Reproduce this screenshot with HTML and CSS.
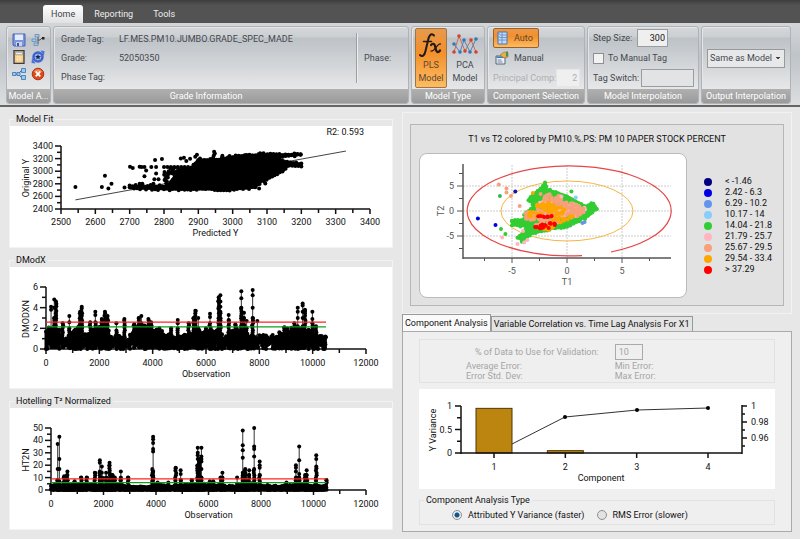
FILE: index.html
```html
<!DOCTYPE html>
<html lang="en">
<head>
    <meta charset="UTF-8">
    <meta name="viewport" content="width=device-width, initial-scale=1.0">
    <title>Model Analysis</title>
    <link rel="stylesheet" href="styles.css">
</head>
<body>
    <nav class="tabs">
        <button class="tab active">Home</button>
        <button class="tab">Reporting</button>
        <button class="tab">Tools</button>
    </nav>
    <header class="ribbon">
        <section class="group actions">
            <div class="group-body icon-grid">
                <button class="icon-btn" aria-label="Save">
                    <svg viewBox="0 0 14 14"><path d="M1 1h12v12H2l-1-1z" fill="#7d95dd" stroke="#4a62b5"/><path d="M3 1.500h8V7H3z" fill="#e4ecfb"/><path d="M4 9h6v4H4z" fill="#c9d3ea"/><path d="M5 10h2v3H5z" fill="#3b55a8"/></svg>
                </button>
                <button class="icon-btn" aria-label="Add node">
                    <svg viewBox="0 0 14 14"><path d="M5 3h2v8H4M7 7h2l2-2h1" fill="none" stroke="#555"/><path d="M1 6h4v2.500H1zM3 10h4v2.500H3zM4 1.500h4V4H4z" fill="#a9cbed" stroke="#5583b3" stroke-width=".7"/><path d="M11 4h2.500v2.500H11z" fill="#222"/></svg>
                </button>
                <button class="icon-btn" aria-label="Calculator">
                    <svg viewBox="0 0 14 14"><path d="M2 .7h10v12.600H2z" fill="#f8c778" stroke="#343c50" stroke-width="1.300"/><path d="M3.500 2.300h7v2.400h-7z" fill="#e8edf5" stroke="#777" stroke-width=".5"/><path d="M3.500 7h7M3.500 9.300h7M5.800 5.500V12M8.200 5.500V12" stroke="#fff1cf" stroke-width=".7"/></svg>
                </button>
                <button class="icon-btn" aria-label="Refresh">
                    <svg viewBox="0 0 14 14"><circle cx="7" cy="7" r="4.500" fill="#9fb6ea" stroke="#3e63cf" stroke-width="2.500"/><path d="M9.500 .5l4 .5-.5 5zM4.500 13.500L.5 13l.5-5z" fill="#4a72dc"/><path d="M7 4l.8 2 2.200.3-1.700 1.200.5 2L7 8.300 5.200 9.500l.5-2L4 6.300 6.200 6z" fill="#18274f"/></svg>
                </button>
                <button class="icon-btn" aria-label="Flow">
                    <svg viewBox="0 0 14 14"><path d="M3 7h3l4-4M6 7l4 4" fill="none" stroke="#3468a6"/><path d="M.5 5.500h3.500v3H.5zM5 5.500h3v3H5zM9.500 1.500h4v4h-4zM9.500 8.500h4v4h-4z" fill="#9bc9f0" stroke="#3871b3" stroke-width=".8"/></svg>
                </button>
                <button class="icon-btn" aria-label="Close">
                    <svg viewBox="0 0 14 14"><circle cx="7" cy="7" r="5.800" fill="#dd4a1c" stroke="#ad3614"/><path d="M2.500 5a5 5 0 0 1 9 0z" fill="#f08e60"/><path d="M4.700 4.700l4.600 4.600M9.300 4.700L4.700 9.300" stroke="#fff" stroke-width="1.800"/></svg>
                </button>
            </div>
            <h2 class="caption">Model A...</h2>
        </section>
        <section class="group grade">
            <div class="group-body grade-body">
                <dl class="fields">
                    <dt>Grade Tag:</dt><dd>LF.MES.PM10.JUMBO.GRADE_SPEC_MADE</dd>
                    <dt>Grade:</dt><dd>52050350</dd>
                    <dt>Phase Tag:</dt><dd></dd>
                </dl>
                <div class="phase">Phase:</div>
            </div>
            <h2 class="caption caption-wide">Grade Information</h2>
        </section>
        <section class="group model-type">
            <div class="group-body models">
                <button class="big-btn pressed">
                    <svg viewBox="0 0 28 28"><g fill="none" stroke="#211b16" stroke-linecap="round"><path d="M17 4.500c-3-3-5 0-6 5L8.500 20c-1 5-3.500 6-5.500 4" stroke-width="2"/><path d="M6.500 10.500h8" stroke-width="1.500"/><path d="M14 14c3-3 4 0 4.500 3s2 6 4.500 2.500" stroke-width="2.200"/><path d="M23.500 13c-3-1-6 8-9.500 7" stroke-width="1.300"/></g></svg>
                    PLS<br>Model
                </button>
                <button class="big-btn">
                    <svg viewBox="0 0 28 28"><path d="M3 21L8 5l6 15 6-11 5 12" fill="none" stroke="#d2694f"/><path d="M3 13l6 8 4-12 6 12 6-13" fill="none" stroke="#4d86bc"/><g fill="#d0432c"><circle cx="8" cy="5" r="1.800"/><circle cx="3" cy="21" r="1.800"/><circle cx="14" cy="20" r="1.800"/><circle cx="20" cy="9" r="1.800"/><circle cx="25" cy="21" r="1.800"/></g><g fill="#3477b7"><circle cx="3" cy="13" r="1.800"/><circle cx="13" cy="9" r="1.800"/><circle cx="9" cy="21" r="1.800"/><circle cx="19" cy="21" r="1.800"/><circle cx="25" cy="8" r="1.800"/></g></svg>
                    PCA<br>Model
                </button>
            </div>
            <h2 class="caption">Model Type</h2>
        </section>
        <section class="group selection">
            <div class="group-body rows">
                <button class="row-btn pressed">
                    <svg viewBox="0 0 14 14"><path d="M3 1h9v12H3z" fill="#c3dbf7" stroke="#4a76b3"/><path d="M2 3h3M2 6h3M2 9h3M5 4h7M5 6.500h7M5 9h7M7 1v12" stroke="#5b87c2" stroke-width=".8"/></svg>
                    Auto
                </button>
                <button class="row-btn">
                    <svg viewBox="0 0 14 14"><path d="M1 5h9v8H1z" fill="#eef3fa" stroke="#53657f"/><path d="M1.500 5.500h8v1.500h-8z" fill="#4279b8"/><path d="M2.500 9h4M2.500 11h5" stroke="#6c84a3"/><path d="M5 4l4-3 4 1v4L9 7z" fill="#e6b047" stroke="#9e6d23" stroke-width=".6"/><path d="M11 .5h2v5h-2z" fill="#4d8c57"/></svg>
                    Manual
                </button>
                <div class="field disabled">
                    <label for="comp">Principal Comp:</label>
                    <input id="comp" class="num" type="text" value="2" disabled>
                </div>
            </div>
            <h2 class="caption">Component Selection</h2>
        </section>
        <section class="group interpolation">
            <div class="group-body rows">
                <div class="field">
                    <label for="step">Step Size:</label>
                    <input id="step" class="num step" type="text" value="300">
                </div>
                <label class="check"><input type="checkbox"> To Manual Tag</label>
                <div class="field">
                    <label for="switch">Tag Switch:</label>
                    <input id="switch" class="switch" type="text">
                </div>
            </div>
            <h2 class="caption">Model Interpolation</h2>
        </section>
        <section class="group output">
            <div class="group-body output-body">
                <select aria-label="Output interpolation">
                    <option>Same as Model</option>
                </select>
            </div>
            <h2 class="caption">Output Interpolation</h2>
        </section>
    </header>
    <main class="content">
        <div class="left">
            <fieldset class="chart-box">
                <legend>Model Fit</legend>
                <svg id="fitChart" class="chart" viewBox="0 0 382 121"></svg>
            </fieldset>
            <fieldset class="chart-box">
                <legend>DModX</legend>
                <svg id="dmodChart" class="chart" viewBox="0 0 382 121"></svg>
            </fieldset>
            <fieldset class="chart-box">
                <legend>Hotelling T² Normalized</legend>
                <svg id="hotelChart" class="chart" viewBox="0 0 382 121"></svg>
            </fieldset>
        </div>
        <div class="right">
            <section class="score-wrap">
                <div class="score">
                    <h3>T1 vs T2 colored by PM10.%.PS: PM 10 PAPER STOCK PERCENT</h3>
                    <div class="score-body">
                        <svg id="scoreChart" class="score-chart" viewBox="0 0 266 143"></svg>
                        <ul class="key">
                            <li class="k1">&lt; -1.46</li>
                            <li class="k2">2.42 - 6.3</li>
                            <li class="k3">6.29 - 10.2</li>
                            <li class="k4">10.17 - 14</li>
                            <li class="k5">14.04 - 21.8</li>
                            <li class="k6">21.79 - 25.7</li>
                            <li class="k7">25.67 - 29.5</li>
                            <li class="k8">29.54 - 33.4</li>
                            <li class="k9">&gt; 37.29</li>
                        </ul>
                    </div>
                </div>
            </section>
            <section class="analysis">
                <div class="sub-tabs">
                    <button class="sub-tab active">Component Analysis</button>
                    <button class="sub-tab">Variable Correlation vs. Time Lag Analysis For X1</button>
                </div>
                <div class="panel">
                    <div class="validation">
                        <div class="val-row">
                            <label for="pct">% of Data to Use for Validation:</label>
                            <input id="pct" type="text" value="10" disabled>
                        </div>
                        <div class="errors">
                            <span>Average Error:</span><span>Min Error:</span>
                            <span>Error Std. Dev:</span><span>Max Error:</span>
                        </div>
                    </div>
                    <svg id="compChart" class="chart" viewBox="0 0 356 100"></svg>
                    <fieldset class="type-box">
                        <legend>Component Analysis Type</legend>
                        <label><input type="radio" name="type" checked> Attributed Y Variance (faster)</label>
                        <label><input type="radio" name="type"> RMS Error (slower)</label>
                    </fieldset>
                </div>
            </section>
        </div>
    </main>
    <script src="charts.js"></script>
</body>
</html>
```
FILE: styles.css
```css
* {
    box-sizing: border-box;
    margin: 0;
    padding: 0;
}
body {
    min-height: 100vh;
    background-color: #e7e7e7;
    color: #111;
    font-family: Roboto, "Liberation Sans", sans-serif;
    font-size: 9px;
    line-height: 12px;
}
button, input, select {
    font: inherit;
    color: inherit;
}
button {
    border: none;
    background: none;
}
.tabs {
    height: 23px;
    padding: 5px 0 0 43px;
    display: flex;
    gap: 2px;
    background: linear-gradient(#3c3c3c, #535353 5px);
}
.tab {
    padding: 0 9px;
    height: 18px;
    color: #eee;
}
.tab.active {
    padding: 0 8px;
    border-radius: 3px 3px 0 0;
    background: linear-gradient(#fff, #dfe1e3);
    color: #444;
}
.ribbon {
    display: flex;
    gap: 2px;
    padding: 3px 9px 1px 6px;
    border-bottom: 2px solid #666;
    background: linear-gradient(#d3d6d9, #bfc4c9 40%, #dcdedf);
}
.group {
    display: flex;
    flex-direction: column;
    height: 78px;
    border: 1px solid #b0b3b6;
    border-radius: 3px;
    box-shadow: inset 1px 1px 0 #e4e6e8;
    background: linear-gradient(#d5d7d9, #cccfd2 10px, #bdc2c7 11px, #e6e7e8 62px);
    color: #44484e;
    overflow: hidden;
}
.group-body {
    height: 62px;
}
.caption {
    flex: 1;
    font-size: 9px;
    font-weight: 400;
    line-height: 14px;
    text-align: center;
    white-space: nowrap;
    color: #fff;
    background: linear-gradient(#b0b0b0, #9a9a9a);
}
.caption-wide {
    padding-right: 50px;
}
.actions {
    width: 45px;
}
.grade {
    flex: 1;
}
.model-type {
    width: 74px;
}
.selection {
    width: 98px;
}
.interpolation {
    width: 112px;
}
.output {
    width: 90px;
}
.icon-grid {
    display: grid;
    grid-template-columns: 14px 14px;
    grid-auto-rows: 14px;
    gap: 3px 5px;
    padding: 6px 5px;
}
.icon-btn svg {
    display: block;
    width: 14px;
    height: 14px;
}
.grade-body {
    display: flex;
    padding: 6px 7px;
}
.fields {
    flex: 1;
    display: grid;
    grid-template-columns: 58px 1fr;
    grid-auto-rows: 19px;
}
.phase {
    width: 45px;
    padding: 19px 0 0 7px;
    border-left: 1px solid #9b9fa3;
    box-shadow: inset 1px 0 0 #eee;
}
.models {
    display: flex;
    gap: 2px;
    padding: 1px 3px;
}
.big-btn {
    width: 32px;
    height: 60px;
    line-height: 13px;
    border: 1px solid transparent;
    border-radius: 2px;
}
.big-btn svg {
    display: block;
    width: 28px;
    height: 28px;
    margin: 0 auto;
}
.pressed {
    border: 1px solid #9b7648;
    border-radius: 2px;
    background: linear-gradient(#e8994d, #f38f2b 40%, #fdbc62);
    color: #5e4630;
}
.rows {
    display: flex;
    flex-direction: column;
    align-items: flex-start;
    padding: 1px 4px 1px 5px;
}
.row-btn {
    display: flex;
    align-items: center;
    gap: 5px;
    height: 20px;
    padding: 0 5px 0 1px;
    border: 1px solid transparent;
}
.row-btn.pressed {
    border-color: #9b5f2c;
}
.row-btn svg {
    width: 14px;
    height: 14px;
}
.field {
    display: flex;
    align-items: center;
    justify-content: space-between;
    width: 100%;
    height: 20px;
    white-space: nowrap;
}
.field input {
    height: 18px;
    padding: 0 2px;
    border: 1px solid #9a9da0;
    background-color: #efefef;
}
.field .num {
    width: 24px;
    text-align: right;
}
.field .step {
    width: 31px;
    margin-right: 26px;
    color: #111;
}
.field .switch {
    width: 53px;
    background-color: #e2e3e4;
}
.field.disabled {
    color: #adb0b3;
}
.field.disabled input {
    border-color: #e6e6e6;
}
.check {
    display: flex;
    align-items: center;
    gap: 4px;
    height: 20px;
}
input[type="checkbox"] {
    appearance: none;
    width: 11px;
    height: 11px;
    border: 1px solid #8d9093;
    background-color: #f2f2f2;
}
.output-body {
    display: flex;
    align-items: center;
    padding: 0 5px;
}
select {
    appearance: none;
    width: 100%;
    height: 19px;
    padding: 0 2px;
    border: 1px solid #999;
    border-radius: 0;
    background-color: #e7e8e9;
    background-image: linear-gradient(45deg, transparent 50%, #444 50%), linear-gradient(135deg, #444 50%, transparent 50%);
    background-position: right 6px center, right 3px center;
    background-size: 3px 3px;
    background-repeat: no-repeat;
}
.content {
    display: grid;
    grid-template-columns: 384fr 390fr;
    gap: 9px;
    padding: 5px 8px 6px 9px;
}
.chart-box {
    min-width: 0;
    margin-bottom: 5px;
    border: 1px solid #f3f3f3;
}
.chart-box legend {
    margin-left: 4px;
    padding: 0 2px;
    line-height: 14px;
}
.chart {
    display: block;
    width: 100%;
    background-color: #fff;
}
svg text {
    font-size: 9px;
    fill: #111;
}
.score-wrap {
    padding: 11px 7px 7px;
    border: 1px solid #f2f2f2;
}
.score {
    padding: 7px 8px;
    border: 1px solid #b6b6b6;
    background-color: #e2e2e2;
}
.score h3 {
    font-size: 9px;
    font-weight: 400;
    line-height: 14px;
    text-align: center;
    color: #111;
}
.score-body {
    display: flex;
    align-items: center;
    gap: 17px;
    margin-top: 7px;
}
.score-chart {
    flex: 1;
    min-width: 0;
    border: 1px solid #bbb;
    border-radius: 8px;
    background-color: #fff;
}
.score-chart text {
    fill: #555;
}
.key {
    width: 71px;
    list-style: none;
    white-space: nowrap;
}
.key li {
    display: flex;
    align-items: center;
    gap: 13px;
    line-height: 11px;
}
.key li::before {
    content: "";
    width: 8px;
    height: 8px;
    border-radius: 50%;
    background-color: var(--dot);
}
.k1 { --dot: #000080; }
.k2 { --dot: #0000e6; }
.k3 { --dot: #6495ed; }
.k4 { --dot: #87cefa; }
.k5 { --dot: #32cd32; }
.k6 { --dot: #ffb6c1; }
.k7 { --dot: #f8a07a; }
.k8 { --dot: #ffa500; }
.k9 { --dot: #f00; }
.sub-tabs {
    display: flex;
    align-items: flex-end;
}
.sub-tab {
    height: 15px;
    padding: 0 2px;
    border: 1px solid #999;
    border-bottom: none;
    white-space: nowrap;
    background-color: #e4e4e4;
}
.sub-tab.active {
    height: 17px;
    padding: 0 2px;
    background-color: #fafafa;
}
.panel {
    padding: 7px 16px 6px;
    border: 1px solid #aaa;
    background-color: #efefef;
}
.validation {
    margin-bottom: 6px;
    padding: 2px 0 1px;
    border: 1px solid #e2e2e2;
    color: #a5a5a5;
}
.val-row {
    display: grid;
    grid-template-columns: 55% 1fr;
    align-items: center;
    height: 19px;
}
.val-row label {
    padding-left: 55px;
}
.val-row input {
    width: 28px;
    height: 16px;
    padding: 0 3px;
    border: 1px solid #aaa;
    background-color: #efefef;
}
.errors {
    display: grid;
    grid-template-columns: 55% 1fr;
    line-height: 10px;
}
.errors span:nth-child(odd) {
    padding-left: 46px;
}
.type-box {
    display: flex;
    gap: 12px;
    height: 31px;
    margin-top: 5px;
    padding: 2px 0 0 32px;
    border: 1px solid #e2e2e2;
}
.type-box legend {
    margin-left: -28px;
    padding: 0 2px;
}
.type-box label {
    display: flex;
    align-items: center;
    gap: 6px;
    height: 14px;
}
input[type="radio"] {
    appearance: none;
    width: 10px;
    height: 10px;
    border: 1px solid #909090;
    border-radius: 50%;
    background-color: #e2e2e2;
}
input[type="radio"]:checked {
    background: radial-gradient(#16558b 0 2px, #e8eef4 3px);
}
```
FILE: charts.js
```js
const NS = 'http://www.w3.org/2000/svg';
let seed = 7;

function rnd() {
    seed = (seed * 16807) % 2147483647;
    return seed / 2147483647;
}

function add(svg, tag, attrs, text) {
    const el = document.createElementNS(NS, tag);
    for (const k in attrs) el.setAttribute(k, attrs[k]);
    if (text !== undefined) el.textContent = text;
    svg.appendChild(el);
    return el;
}

function scale(v0, v1, p0, p1) {
    return v => p0 + (v - v0) / (v1 - v0) * (p1 - p0);
}

function line(svg, x1, y1, x2, y2, color, w) {
    add(svg, 'line', { x1, y1, x2, y2, stroke: color || '#111', 'stroke-width': w || 1 });
}

function label(svg, x, y, text, anchor) {
    add(svg, 'text', { x, y, 'text-anchor': anchor || 'middle' }, text);
}

function dot(svg, x, y, color, r) {
    add(svg, 'circle', { cx: x, cy: y, r: r || 2, fill: color || '#000' });
}

function poly(svg, pts, x, y, color) {
    add(svg, 'polygon', { points: pts.map(p => x(p[0]) + ',' + y(p[1])).join(' '), fill: color, stroke: color, 'stroke-width': 2, 'stroke-linejoin': 'round' });
    // rough up the outline with single observations
    pts.forEach((a, i) => {
        const b = pts[(i + 1) % pts.length];
        const len = Math.hypot(x(b[0]) - x(a[0]), y(b[1]) - y(a[1]));
        for (let t = 0; t < len; t += 3) {
            const k = t / len;
            dot(svg, x(a[0] + (b[0] - a[0]) * k), y(a[1] + (b[1] - a[1]) * k) + rnd() * 2 - 1, color);
        }
    });
}

function axes(svg, o) {
    const { x, y } = o;
    const x0 = x(o.xs[0]), x1 = x(o.xs[1]), y0 = y(o.ys[0]), y1 = y(o.ys[1]);
    line(svg, x0, y1, x0, y0, '#111', 1.5);
    line(svg, x0, y0, x1, y0, '#111', 1.5);
    for (let v = o.xs[0]; v <= o.xs[1]; v += o.xs[2] / 2) {
        const major = (v - o.xs[0]) % o.xs[2] === 0;
        line(svg, x(v), y0, x(v), y0 + (major ? 5 : 4), '#111', 1.5);
        if (major) label(svg, x(v), 99, v);
    }
    for (let v = o.ys[0]; v <= o.ys[1]; v += o.ys[2] / 2) {
        const major = (v - o.ys[0]) % o.ys[2] === 0;
        line(svg, x0 - (major ? 6 : 4), y(v), x0, y(v), '#111', 1.5);
        if (major) label(svg, x0 - 8, y(v) + 3, v, 'end');
    }
    label(svg, (x0 + x1) / 2, 110, o.xTitle);
    add(svg, 'text', { transform: 'translate(19 52) rotate(-90)', 'text-anchor': 'middle' }, o.yTitle);
}

function drawFit() {
    const svg = document.getElementById('fitChart');
    const x = scale(2500, 3400, 51, 360), y = scale(2400, 3400, 83, 20);
    axes(svg, { x, y, xs: [2500, 3400, 100], ys: [2400, 3400, 200], xTitle: 'Predicted Y', yTitle: 'Original Y' });
    label(svg, 354, 9, 'R2: 0.593', 'end');
    line(svg, x(2542), y(2545), x(3330), y(3320), '#444');
    const cloud = [[2840, 2985], [2880, 3060], [2900, 3180], [2960, 3190], [3000, 3230], [3040, 3262], [3198, 3268], [3198, 3260], [3120, 3220], [3150, 3150], [3200, 3120], [3200, 3085], [3160, 3090], [3145, 3000], [3115, 2910], [3085, 2840], [3065, 2740], [3000, 2708], [2800, 2712], [2700, 2735], [2700, 2765], [2810, 2765]];
    poly(svg, cloud, x, y, '#000');
    const points = [[2542, 2751], [2619, 2751], [2628, 2927], [2638, 2724], [2647, 2799], [2685, 2740], [2701, 3070], [2709, 3049], [2729, 3070], [2735, 3068], [2743, 3065], [2743, 2921], [2774, 3177], [2794, 3193], [2763, 3065], [2777, 3065], [2777, 2964], [2748, 3012], [2849, 3203], [2858, 3214], [2876, 3198], [2896, 3262], [2891, 3230], [2905, 3203], [2865, 3161], [2946, 3310], [2948, 3280], [2945, 3250], [2943, 3215], [2970, 3246], [2991, 3240], [3080, 3285], [3090, 3285], [3095, 2804], [3077, 2724], [2772, 2873], [2784, 2873], [2769, 2799], [2729, 2799], [2737, 2799]];
    points.forEach(p => dot(svg, x(p[0]), y(p[1])));
    for (let i = 0; i < 50; i++) dot(svg, x(2800 + rnd() * 60), y(2780 + rnd() * 270));
    for (let v = 2800; v < 2880; v += 10) dot(svg, x(v), y(3065));
}

// spikes: [observation, top of the dense part, single values above it...]
function drawObservations(id, o) {
    const svg = document.getElementById(id);
    const { x, y } = o;
    axes(svg, o);
    for (let i = 0; i < o.base.length - 1; i++) {
        const [a, av] = o.base[i], [b, bv] = o.base[i + 1];
        for (let v = a; v < b; v += 50) {
            const top = (av + (bv - av) * (v - a) / (b - a)) * (0.7 + rnd() * 0.35);
            const low = rnd() * rnd() * o.low;
            line(svg, x(v), y(low), x(v), y(top), '#000', 3);
            dot(svg, x(v), y(top));
            dot(svg, x(v), y(low));
        }
    }
    o.spikes.forEach(([obs, dense, ...rest]) => {
        line(svg, x(obs), y(0.2), x(obs), y(Math.max(dense, ...rest)), '#333');
        for (let p = y(0.2); p > y(dense); p -= 2.4) dot(svg, x(obs) + rnd() - 0.5, p);
        dot(svg, x(obs), y(dense));
        rest.forEach(v => dot(svg, x(obs), y(v)));
    });
    line(svg, x(0), y(o.red), x(10500), y(o.red), '#f22', 1.3);
    line(svg, x(0), y(o.green), x(10500), y(o.green), '#169b22', 1.3);
}

function drawScore() {
    const svg = document.getElementById('scoreChart');
    const x = scale(0, 5, 147, 202), y = scale(0, 5, 57, 32);
    [-5, 0, 5].forEach(v => {
        add(svg, 'line', { x1: x(v), y1: 11, x2: x(v), y2: 104, stroke: '#ccc', 'stroke-dasharray': '2 1' });
        add(svg, 'line', { x1: 43, y1: y(v), x2: 251, y2: y(v), stroke: '#ccc', 'stroke-dasharray': '2 1' });
        line(svg, x(v), 104, x(v), 109, '#555');
        line(svg, 37, y(v), 43, y(v), '#555');
        label(svg, x(v), 120, v);
        label(svg, 34, y(v) + 3, v, 'end');
    });
    [-7.5, -2.5, 2.5, 7.5].forEach(v => {
        line(svg, x(v), 104, x(v), 107, '#555');
        line(svg, 39, y(v), 43, y(v), '#555');
    });
    line(svg, 43, 10, 43, 105, '#555', 1.5);
    line(svg, 43, 104, 251, 104, '#555', 1.5);
    // control limit, left open at the lower right
    add(svg, 'path', { d: 'M191 98A102 45 0 1 0 162 101.600', fill: 'none', stroke: '#e84545', 'stroke-width': 1.2 });
    add(svg, 'ellipse', { cx: 147, cy: 57, rx: 66, ry: 30, fill: 'none', stroke: '#f5b545' });
    label(svg, 147, 131, 'T1');
    add(svg, 'text', { transform: 'translate(24 57) rotate(-90)', 'text-anchor': 'middle' }, 'T2');

    const green = [[-2, 5.3], [-1.8, 4.3], [-0.8, 3.6], [0, 3], [0.8, 1.9], [1.7, 1], [2.4, 1.6], [2.7, 0.5], [1.9, -1.1], [1.1, -1.9], [0, -3], [-1.8, -3.8], [-3.4, -4.7], [-4.1, -6], [-4.5, -5.2], [-3.9, -4.2], [-3.7, -3], [-5, -2.8], [-5, -2], [-3.6, -1.6], [-3.9, -0.6], [-2.9, 1.2], [-3.5, 2], [-3.3, 2.9], [-2.6, 4.2]];
    [[1.6, -2.2], [1.4, -2.4], [0.3, -2.9]].forEach(p => dot(svg, x(p[0]), y(p[1]), '#6495ed'));
    poly(svg, green, x, y, '#32cd32');
    // [color, centre x, centre y, radius x, radius y, dots]
    const clusters = [
        ['#ffb6c1', -1, 0, 2, 2.4, 90], ['#ffb6c1', 0.6, 0.3, 1.2, 1, 30],
        ['#f8a07a', -1.3, 2.5, 0.8, 1, 30], ['#f8a07a', -0.6, 0.3, 2.1, 1.5, 70],
        ['#f8a07a', -3.3, -1, 0.7, 0.9, 25], ['#f8a07a', -2, -2, 1.3, 1, 30],
        ['#ffa500', -1.9, 0.8, 1, 0.9, 28], ['#ffa500', -0.8, 0, 0.9, 0.8, 20],
        ['#ffa500', -0.6, -1.8, 0.8, 0.5, 12], ['#ffa500', -2, -3.4, 0.8, 0.7, 12],
        ['#ffa500', -2.9, -0.6, 0.8, 0.6, 10], ['#f8a07a', 0.9, -0.3, 0.6, 0.8, 22],
        ['#ffa500', 0.5, -1.1, 0.3, 0.3, 5],
        ['#f00', -2.1, -3.1, 0.9, 0.4, 18], ['#f00', -1.3, -2.6, 0.4, 0.3, 6], ['#f00', -2, -1.1, 0.7, 0.2, 9]
    ];
    clusters.forEach(([color, cx, cy, rx, ry, n]) => {
        for (let i = 0; i < n; i++) {
            const a = rnd() * Math.PI * 2, r = Math.sqrt(rnd());
            dot(svg, x(cx + Math.cos(a) * r * rx), y(cy + Math.sin(a) * r * ry), color);
        }
    });
    const single = [[-6.2, 5.3, '#f8a07a'], [-5.5, 4.5, '#f8a07a'], [-5.5, 3.7, '#f8a07a'], [-5.1, 3, '#f8a07a'], [-4.3, 1, '#f8a07a'], [-4.7, 3.9, '#1414a8'], [-8.1, -1.5, '#0000e6'], [-6.5, -2.8, '#0000e6'], [-6.1, 3, '#32b85a'], [-6, -3.6, '#32cd32'], [-5.6, -4.6, '#32cd32'], [-5.9, -5.3, '#ffb6c1'], [-4.5, -6.6, '#ffb6c1'], [-3.9, -6.3, '#ffb6c1'], [-3.6, -5.8, '#ffb6c1'], [-4, -4, '#ffb6c1'], [0.4, 3.9, '#32cd32'], [0.8, 2.7, '#87cefa'], [-2, 5.7, '#32cd32'], [-3.1, 3.6, '#ffa500'], [-2.4, 3.4, '#f8a07a'], [-0.5, 2.9, '#ffb6c1']];
    single.forEach(p => dot(svg, x(p[0]), y(p[1]), p[2]));
}

function drawComponents() {
    const svg = document.getElementById('compChart');
    const x = scale(1, 4, 75, 289), y = scale(0, 1, 64, 17);
    [[1, 0.95], [2, 0.05]].forEach(([c, v]) => {
        add(svg, 'rect', { x: x(c) - 18, y: y(v), width: 36, height: 64 - y(v), fill: '#bc850f', stroke: '#4d3708' });
    });
    line(svg, 42, 17, 42, 65, '#111', 1.5);
    line(svg, 42, 64, 323, 64, '#111', 1.5);
    line(svg, 323, 16, 323, 65, '#111', 1.5);
    [0, 0.25, 0.5, 0.75, 1].forEach(v => {
        const major = v * 2 % 1 === 0;
        line(svg, major ? 36 : 38, y(v), 42, y(v), '#111', 1.5);
        if (major) label(svg, 33, y(v) + 3, v, 'end');
    });
    [1, 0.98, 0.96].forEach((v, i) => {
        line(svg, 323, 17 + i * 16, 328, 17 + i * 16, '#111', 1.5);
        line(svg, 323, 25 + i * 16, 326, 25 + i * 16, '#111', 1.5);
        label(svg, 332, 20 + i * 16, v, 'start');
    });
    [1, 2, 3, 4].forEach(c => {
        line(svg, x(c), 64, x(c), 69, '#111', 1.5);
        label(svg, x(c), 81, c);
    });
    add(svg, 'polyline', { points: '93,55 146,28 218,21 289,19', fill: 'none', stroke: '#333' });
    [[146, 28], [218, 21], [289, 19]].forEach(p => dot(svg, p[0], p[1]));
    label(svg, 182, 92, 'Component');
    add(svg, 'text', { transform: 'translate(17 41) rotate(-90)', 'text-anchor': 'middle' }, 'Y Variance');
}

drawFit();
drawObservations('dmodChart', {
    x: scale(0, 12000, 36, 356), y: scale(0, 6, 82, 20),
    xs: [0, 12000, 2000], ys: [0, 6, 2], xTitle: 'Observation', yTitle: 'DMODXN',
    red: 2.6, green: 2.15, low: 0.9,
    base: [[0, 2.1], [500, 1.8], [700, 1], [900, 1.4], [1300, 2.3], [1400, 1.3], [1800, 1.9], [2300, 2.4], [2500, 1], [2800, 1.5], [3000, 0.8], [3300, 2.2], [3700, 2.3], [4000, 1.9], [4400, 1.7], [4800, 1.1], [5300, 1.4], [5800, 1.9], [6500, 1.8], [6700, 1.2], [7200, 2], [7500, 1.8], [7800, 1.2], [8300, 1.4], [8600, 1.3], [8900, 2], [9200, 2.2], [9600, 2], [10000, 1.8], [10200, 1.3], [10500, 1.2]],
    spikes: [[190, 2, 4.1, 3.8], [310, 3, 4.8, 4], [375, 4.6], [625, 2.5], [875, 2, 3.2, 2.6], [1280, 3.6], [1340, 4.1], [1660, 2.6], [1850, 2.6, 3.6, 3.3], [2090, 2.9], [2210, 3.6], [2310, 3.2], [2640, 1.8, 2.5], [2940, 2.9], [3310, 2.4], [3475, 3], [3575, 2.5, 3.2], [3840, 2.9], [3940, 2.6], [4250, 2], [4690, 2], [4940, 2, 2.8, 2.5], [5350, 2.5], [5540, 3], [5600, 3.7], [5710, 2, 3], [6000, 2], [6150, 2.5, 3.4, 3.1], [6475, 5], [6540, 3.6, 5.2, 4.6, 4.1], [6850, 2.8, 3.3], [7100, 2.4], [7325, 4, 5.6, 4.9], [7425, 3, 3.5], [7525, 2, 2.7], [7750, 3, 5.7, 5.2, 4], [7925, 1, 2.7], [8940, 2.1], [9310, 2.5], [9440, 2.2, 4, 3.6, 3], [9625, 2.2, 4.4, 4.2, 3.6, 3], [9710, 3.8], [9990, 2.5, 3.6, 2.9], [10125, 2.2], [10480, 1.2]]
});
drawObservations('hotelChart', {
    x: scale(0, 12000, 41, 356), y: scale(0, 50, 82, 20),
    xs: [0, 12000, 2000], ys: [0, 50, 10], xTitle: 'Observation', yTitle: 'HT2N',
    red: 9, green: 6, low: 0.5,
    base: [[0, 3.5], [500, 5], [1500, 4.5], [2500, 5], [3000, 3], [3700, 2.5], [4000, 5], [4500, 3], [5000, 4], [5700, 5], [6500, 4], [7000, 3], [7500, 6], [8200, 3], [9000, 4], [9500, 5], [10500, 3]],
    spikes: [[255, 8, 37, 17], [318, 7, 43, 25, 17], [500, 11], [625, 12, 15], [900, 7], [1150, 10], [1360, 10], [1670, 14], [1860, 15, 24, 22], [1935, 10, 19, 14], [2100, 10, 14], [2230, 20, 22], [2340, 12], [2430, 10], [2660, 8, 15, 10], [2930, 10], [3860, 17], [3890, 15, 43, 41, 38, 33, 31], [4060, 6], [4470, 6], [4750, 18], [4940, 8, 16, 13], [5360, 8], [5590, 20, 34, 30, 28, 25], [5650, 25], [5730, 10, 34, 27, 25, 23, 17], [6050, 7], [6180, 7], [6470, 10], [6530, 10, 14], [7090, 5, 10], [7305, 14, 48, 36, 32, 26], [7400, 17], [7550, 12, 16], [7740, 17, 50, 35, 33, 27], [7950, 12, 23, 20, 18], [8250, 4], [8970, 6], [9330, 10, 20, 18, 15], [9455, 10, 35, 24, 13], [9680, 12], [9740, 12, 16], [10105, 19, 28, 25], [10490, 8]]
});
drawScore();
drawComponents();
```
